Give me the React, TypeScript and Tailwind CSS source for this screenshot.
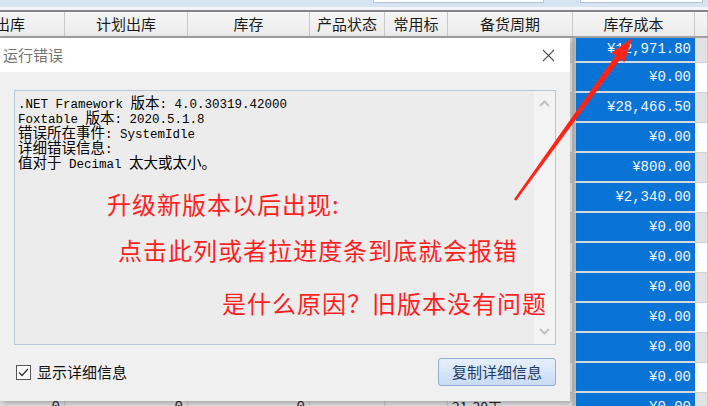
import React from 'react';

const widths = ['w-[65px]', 'w-[123px]', 'w-[122px]', 'w-[75px]', 'w-[63px]', 'w-[125px]', 'w-[122px]', 'w-[13px]'];
const headers = ['出库', '计划出库', '库存', '产品状态', '常用标', '备货周期', '库存成本', ''];
const costs = [
  '¥12,971.80', '¥0.00', '¥28,466.50', '¥0.00', '¥800.00', '¥2,340.00', '¥0.00',
  '¥0.00', '¥0.00', '¥0.00', '¥0.00', '¥0.00', '¥0.00',
];

const ui = { fontFamily: '"Noto Sans CJK SC", "Noto Sans", sans-serif' };
const mono = { fontFamily: '"Liberation Mono", "Noto Sans CJK SC", monospace' };

const Cjk: React.FC<{ children: React.ReactNode }> = ({ children }) => (
  <span className="text-[14.5px] leading-[15px]" style={ui}>{children}</span>
);

// only the last row peeks out under the dialog, so only it gets cell text
const Row: React.FC<{ i: number; cost: string; last: boolean }> = ({ i, cost, last }) => {
  const bg = i % 2 === 0 ? 'bg-[#e2e2e2]' : 'bg-white';
  return (
    <div className={`flex ${i === 0 ? 'h-[25px]' : 'h-[30px]'}`}>
      {widths.map((w, c) =>
        c === 6 ? (
          <div
            key={c}
            className={`${w} shrink-0 flex items-center justify-end pr-[4px] bg-[#0a74d6] text-[#f2f7ff] text-[14px] border-l-[3px] border-l-[#bdbdbd] border-b-2 border-b-[#d3d9df]`}
            style={mono}
          >
            {cost}
          </div>
        ) : (
          <div
            key={c}
            className={`${w} ${bg} shrink-0 flex items-center px-[4px] text-[14px] text-[#222] border-r border-[#c6c6c6] border-b border-b-[#d0d0d0] ${c < 3 ? 'justify-end' : 'justify-start'}`}
            style={mono}
          >
            {!last ? '' : c < 3 ? '0' : c === 5 ? <span style={ui}>21-30天</span> : ''}
          </div>
        )
      )}
    </div>
  );
};

const ErrorDialog: React.FC = () => (
  <div className="absolute left-0 top-[38px] w-[570px] h-[363px] flex flex-col bg-[#f0f0f0] shadow-[2px_2px_6px_rgba(0,0,0,0.3)]" style={ui}>
    <div className="h-[34px] bg-white flex items-center justify-between pl-[3px] pr-[15px]">
      <span className="text-[15px] text-[#747474]">运行错误</span>
      <svg width="13" height="13" viewBox="0 0 13 13">
        <path d="M1 1 L12 12 M12 1 L1 12" stroke="#555" strokeWidth="1.1" />
      </svg>
    </div>
    <div className="flex-1 flex flex-col px-[14px] pt-[18px]">
      <div className="h-[255px] border border-[#b8c7d6] bg-[#ececec] flex">
        <div className="flex-1 pl-[3px] pt-[3px] text-[12.5px] leading-[15px] text-black" style={mono}>
          <div className="h-[15px] whitespace-nowrap">.NET Framework <Cjk>版本</Cjk>: 4.0.30319.42000</div>
          <div className="h-[15px] whitespace-nowrap">Foxtable <Cjk>版本</Cjk>: 2020.5.1.8</div>
          <div className="h-[15px] whitespace-nowrap"><Cjk>错误所在事件</Cjk>: SystemIdle</div>
          <div className="h-[15px] whitespace-nowrap"><Cjk>详细错误信息</Cjk>:</div>
          <div className="h-[15px] whitespace-nowrap"><Cjk>值对于</Cjk> Decimal <Cjk>太大或太小。</Cjk></div>
        </div>
        <div className="w-[21px] bg-[#f3f3f3] flex flex-col items-center justify-between py-[9px]">
          <svg width="11" height="7" viewBox="0 0 11 7">
            <path d="M1 6 L5.5 1.5 L10 6" stroke="#c2c2c2" strokeWidth="2" fill="none" />
          </svg>
          <svg width="11" height="7" viewBox="0 0 11 7">
            <path d="M1 1 L5.5 5.5 L10 1" stroke="#c2c2c2" strokeWidth="2" fill="none" />
          </svg>
        </div>
      </div>
      <div className="flex items-center justify-between mt-[13px]">
        <label className="flex items-center gap-[6px] pl-[2px]">
          <span className="w-[15px] h-[15px] border border-[#555] bg-white flex items-center justify-center">
            <svg width="11" height="9" viewBox="0 0 11 9">
              <path d="M1 4.5 L4 7.5 L10 1" stroke="#333" strokeWidth="1.3" fill="none" />
            </svg>
          </span>
          <span className="text-[15px] text-[#111]">显示详细信息</span>
        </label>
        <button className="w-[118px] h-[28px] rounded-[3px] border border-[#8fb0d8] bg-gradient-to-b from-[#e6f0fb] to-[#c8dcf4] text-[15px] text-[#1f3c66]">
          复制详细信息
        </button>
      </div>
    </div>
    <div className="absolute left-0 top-[151px] text-[24px] leading-[30px] tracking-[1px] text-[#ff1f1f]">
      <div className="pl-[107px]">升级新版本以后出现:</div>
      <div className="pl-[118px] mt-[16px]">点击此列或者拉进度条到底就会报错</div>
      <div className="pl-[222px] mt-[23px]">是什么原因{'\uFF1F'}旧版本没有问题</div>
    </div>
  </div>
);

export default function App() {
  return (
    <div className="relative w-[708px] h-[406px] overflow-hidden bg-white">
      <div className="h-[7px] bg-[#d6e4f2] relative">
        <div className="absolute left-[373px] top-[-2px] w-[171px] h-[5px] bg-white border border-[#b5c3d2]" />
        <div className="absolute left-[580px] top-[-2px] w-[123px] h-[5px] bg-white border border-[#b5c3d2]" />
      </div>
      <div className="h-[3px] bg-[#f3f5f8]" />
      <div className="h-[2px] bg-[#858585]" />
      <div className="flex h-[26px] border-b-2 border-[#a2a2a2] bg-gradient-to-b from-[#f6f6f6] to-[#ebebeb]" style={ui}>
        {headers.map((h, c) => (
          <div
            key={c}
            className={`${widths[c]} shrink-0 overflow-hidden flex items-center border-r border-[#c9c9c9] text-[15px] text-[#1a1a1a] ${c === 0 ? 'justify-start' : 'justify-center'}`}
          >
            <span className={c === 0 ? '-ml-[5px]' : ''}>{h}</span>
          </div>
        ))}
      </div>
      {costs.map((cost, i) => (
        <Row key={i} i={i} cost={cost} last={i === costs.length - 1} />
      ))}
      <ErrorDialog />
      <svg className="absolute left-0 top-0 pointer-events-none" width="708" height="406">
        <polygon
          points="632,38 624.4,62.2 620.3,59.3 516,200.7 514,199.3 615.5,55.7 611.4,52.8"
          fill="#ff2418"
        />
      </svg>
    </div>
  );
}
